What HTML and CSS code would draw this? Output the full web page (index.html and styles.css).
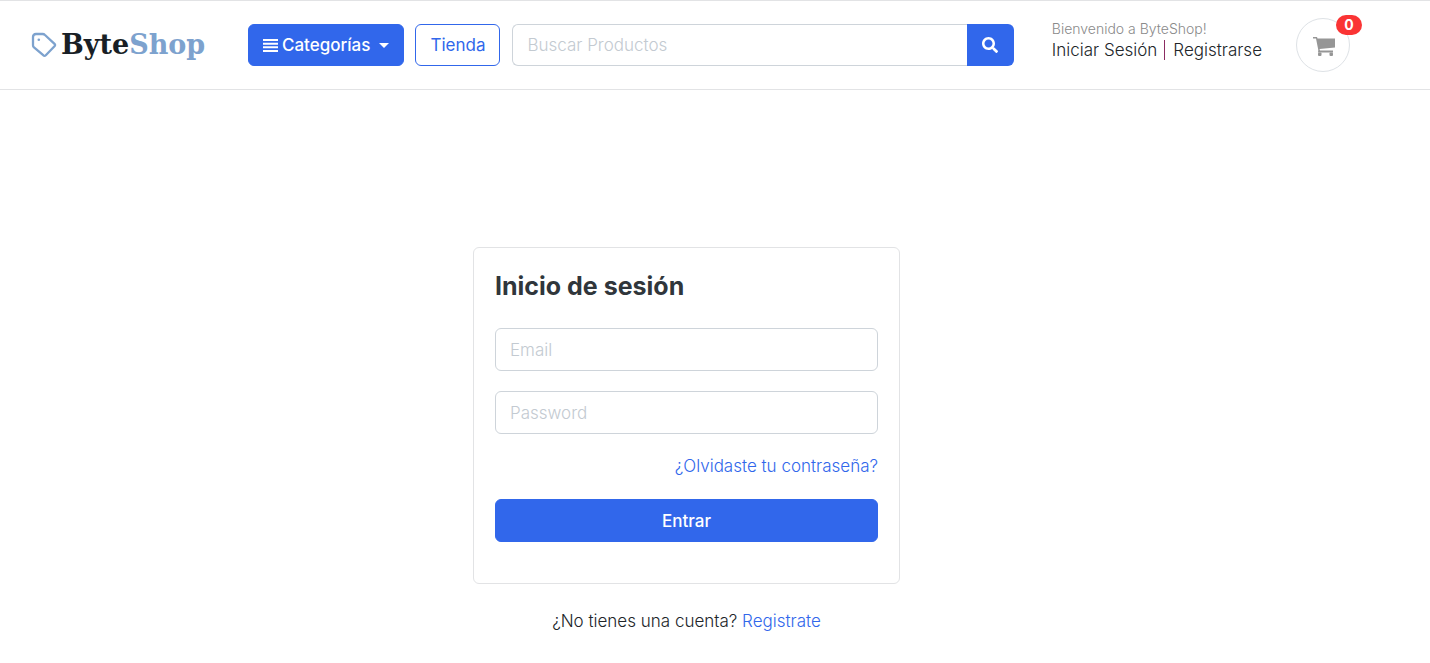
FILE: index.html
```html
<!DOCTYPE html>
<html lang="es">
<head>
<meta charset="utf-8">
<meta name="viewport" content="width=device-width, initial-scale=1">
<title>ByteShop</title>
<link rel="stylesheet" href="styles.css">
</head>
<body>
<header class="header">
  <a class="logo" href="#">
    <svg class="logo-tag" viewBox="0 0 26 26" aria-hidden="true"><path d="M2 5Q2 2 5 2H11.500Q13 2 14 3L23.500 11.800Q24.600 13 23.500 14.200L14.800 23.200Q13.500 24.500 12.200 23.200L3 15.500Q2 14.600 2 13.300Z" fill="none" stroke="currentColor" stroke-width="2.300"/><circle cx="7.800" cy="7.800" r="1.300" fill="currentColor"/></svg>
    <span class="logo-name">Byte<span class="logo-accent">Shop</span></span>
  </a>
  <nav class="menu">
    <button class="btn btn-primary" type="button">
      <svg class="icon-bars" viewBox="0 0 15 13" aria-hidden="true"><path d="M0 1h15M0 4.700h15M0 8.300h15M0 12h15" stroke="currentColor" stroke-width="2"/></svg>
      Categorías
      <span class="caret"></span>
    </button>
    <a class="btn btn-outline" href="#">Tienda</a>
  </nav>
  <form class="search">
    <input class="field search-field" type="text" placeholder="Buscar Productos" aria-label="Buscar Productos">
    <button class="search-btn" type="button" aria-label="Buscar">
      <svg class="icon-search" viewBox="0 0 512 512" aria-hidden="true"><path fill="currentColor" d="M505 442.700L405.300 343c-4.500-4.500-10.600-7-17-7H372c27.600-35.300 44-79.700 44-128C416 93.100 322.900 0 208 0S0 93.100 0 208s93.100 208 208 208c48.300 0 92.700-16.400 128-44v16.300c0 6.400 2.500 12.500 7 17l99.700 99.700c9.400 9.400 24.600 9.400 33.900 0l28.300-28.300c9.400-9.400 9.400-24.600.1-34zM208 336c-70.700 0-128-57.200-128-128 0-70.700 57.200-128 128-128 70.700 0 128 57.200 128 128 0 70.700-57.200 128-128 128z"/></svg>
    </button>
  </form>
  <div class="account">
    <small class="welcome">Bienvenido a ByteShop!</small>
    <div class="account-links"><a href="#">Iniciar Sesión</a><span class="divider"></span><a href="#">Registrarse</a></div>
  </div>
  <a class="cart" href="#" aria-label="Carrito">
    <svg class="icon-cart" viewBox="0 0 22 19" aria-hidden="true"><path d="M0 0H4L4.500 1.500H22V10.500L6.500 12L7 13.500H20V15.500H5L5.300 13L3 1.500H0Z" fill="currentColor"/><rect x="5" y="15.500" width="3.500" height="3.500" rx="1" fill="currentColor"/><rect x="16.500" y="15.500" width="3.500" height="3.500" rx="1" fill="currentColor"/></svg>
    <span class="badge">0</span>
  </a>
</header>
<main class="main">
  <form class="card">
    <h1 class="card-title">Inicio de sesión</h1>
    <input class="field" type="email" placeholder="Email" aria-label="Email">
    <input class="field" type="password" placeholder="Password" aria-label="Password">
    <a class="link forgot" href="#">¿Olvidaste tu contraseña?</a>
    <button class="btn btn-primary" type="button">Entrar</button>
  </form>
  <p class="signup">¿No tienes una cuenta? <a class="link" href="#">Registrate</a></p>
</main>
</body>
</html>
```
FILE: styles.css
```css
* { box-sizing: border-box; }
body {
  margin: 0;
  font: 300 17px/26px Inter, sans-serif;
  color: #212529;
  background: #fff;
}
a { color: inherit; text-decoration: none; }
svg { display: block; flex: none; }

.header {
  display: flex;
  align-items: center;
  height: 90px;
  padding: 0 80px 0 31px;
  border: solid #e2e3e5;
  border-width: 1px 0;
}
.logo {
  display: flex;
  align-items: center;
  gap: 4px;
  width: 217px;
  color: #7da2ce;
}
.logo-tag { width: 26px; height: 26px; }
.logo-name {
  font: 700 27px/36px "DejaVu Serif", serif;
  color: #191f26;
}
.logo-accent { color: #7da2ce; }

.menu { display: flex; gap: 11px; margin-right: 12px; }
.btn {
  display: flex;
  align-items: center;
  justify-content: center;
  gap: 4px;
  height: 42px;
  padding: 0 14px;
  border: 1px solid #3167eb;
  border-radius: 6px;
  font: 400 17px/26px Inter, sans-serif;
  cursor: pointer;
}
.btn-primary { color: #fff; background: #3167eb; font-weight: 500; }
.btn-outline { color: #3167eb; }
.icon-bars { width: 15px; height: 13px; }
.caret {
  margin-left: 5px;
  border: 5px solid transparent;
  border-top-color: currentColor;
  border-bottom-width: 0;
}

.field {
  width: 100%;
  height: 43px;
  padding: 0 14px;
  border: 1px solid #ced4da;
  border-radius: 6px;
  font: 300 17px/26px Inter, sans-serif;
  color: #212529;
  background: #fff;
}
.field::placeholder { color: #c3cad1; opacity: 1; }

.search { display: flex; flex: 1; }
.search-field { flex: 1; height: 42px; border-right: 0; border-radius: 6px 0 0 6px; }
.search-btn {
  display: flex;
  align-items: center;
  justify-content: center;
  width: 47px;
  height: 42px;
  padding: 0;
  border: 0;
  border-radius: 0 6px 6px 0;
  color: #fff;
  background: #3167eb;
}
.icon-search { width: 16px; height: 16px; }

.account { margin: 0 34px 10px 38px; white-space: nowrap; }
.welcome { display: block; font-size: 14px; line-height: 20px; color: #8a8a8a; }
.account-links { display: flex; align-items: center; line-height: 22px; }
.divider { width: 1px; height: 20px; margin: 0 8px 0 7px; background: #8b2c62; }

.cart {
  position: relative;
  display: flex;
  align-items: center;
  justify-content: center;
  width: 54px;
  height: 54px;
  padding: 2px 0 0 2px;
  border: 1px solid #dee2e6;
  border-radius: 50%;
  color: #969696;
}
.icon-cart { width: 22px; height: 19px; }
.badge {
  position: absolute;
  top: -4px;
  right: -13px;
  width: 26px;
  border-radius: 10px;
  font-size: 14px;
  font-weight: 700;
  line-height: 20px;
  text-align: center;
  color: #fff;
  background: #fa3434;
}

.main {
  display: flex;
  flex-direction: column;
  align-items: center;
  padding: 157px 57px 24px 0;
}
.card {
  display: flex;
  flex-direction: column;
  gap: 20px;
  width: 100%;
  max-width: 427px;
  padding: 21px 21px 41px;
  border: 1px solid #e2e3e5;
  border-radius: 6px;
}
.card-title {
  margin: 0 0 5px;
  font-size: 25px;
  font-weight: 700;
  line-height: 34px;
  color: #30363b;
}
.card .btn { height: 43px; }
.link { color: #3167eb; }
.forgot { align-self: flex-end; line-height: 25px; }
.signup { margin: 24px 0 0; }
```
